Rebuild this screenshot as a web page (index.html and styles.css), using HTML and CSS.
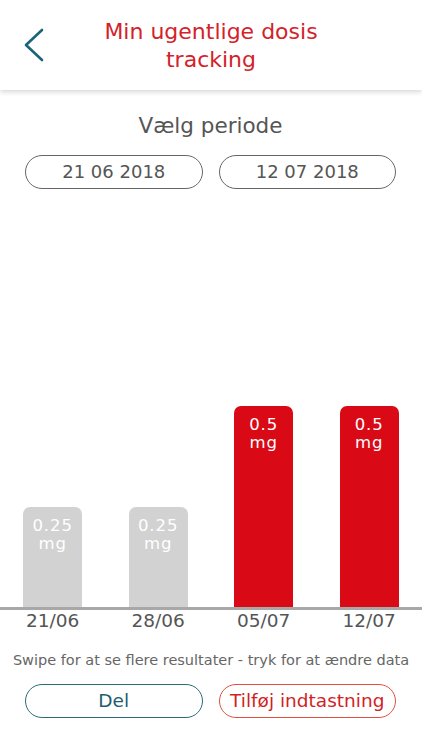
FILE: index.html
```html
<!DOCTYPE html>
<html lang="da">
<head>
<meta charset="utf-8" />
<title>Min ugentlige dosis tracking</title>
<link rel="stylesheet" href="styles.css">
</head>
<body>
<!--topbar-->
<div class="topbar">
  <a class="back" href="#">
    <svg width="20" height="34" viewBox="0 0 20 34"><polyline points="18,2 2,17 18,32" fill="none" stroke="#1b6478" stroke-width="2.6" stroke-linecap="round" stroke-linejoin="round"/></svg>
  </a>
  <h1 class="title">Min ugentlige dosis<br/>tracking</h1>
  <div></div>
</div>

<div class="period">
  <h2>Vælg periode</h2>
  <div class="dates">
    <div class="pill">21 06 2018</div>
    <div class="pill">12 07 2018</div>
  </div>
</div>

<!--chart-->
<div class="chart">
  <div class="col"><div class="bar bar_low" style="height:100px"><span>0.25</span><span>mg</span></div></div>
  <div class="col"><div class="bar bar_low" style="height:100px"><span>0.25</span><span>mg</span></div></div>
  <div class="col"><div class="bar bar_high" style="height:201px"><span>0.5</span><span>mg</span></div></div>
  <div class="col"><div class="bar bar_high" style="height:201px"><span>0.5</span><span>mg</span></div></div>
</div>
<div class="axis">
  <div>21/06</div>
  <div>28/06</div>
  <div>05/07</div>
  <div>12/07</div>
</div>

<p class="hint">Swipe for at se flere resultater - tryk for at ændre data</p>

<div class="actions">
  <a class="btn btn_share" href="#">Del</a>
  <a class="btn btn_add" href="#">Tilføj indtastning</a>
</div>
</body>
</html>
```

FILE: styles.css
```css
body, h1, h2, p, div {margin:0;padding:0}
body { background:#fff; font-family:"DejaVu Sans", Verdana, sans-serif; color:#555; width:422px; }
a { text-decoration:none }

.topbar { height:90px; display:grid; grid-template-columns:70px 1fr 70px; align-items:center; box-shadow:0 2px 5px rgba(0,0,0,.16); position:relative; z-index:2 }
.back { display:flex; padding-left:24px; }
.title { font-size:22px; line-height:28px; font-weight:normal; color:#d3222a; text-align:center; margin-top:2px }

.period { padding:0 26px 0 25px; }
.period h2 { font-size:21.5px; line-height:26px; font-weight:normal; text-align:center; margin-top:23px; color:#555 }
.dates { display:grid; grid-template-columns:1fr 1fr; gap:16px; margin-top:16px }
.pill { height:32px; line-height:32px; border:1px solid #666; border-radius:17px; text-align:center; font-size:18px; color:#555 }

.chart { height:418px; display:flex; align-items:flex-end; border-bottom:3px solid #a8a8a8 }
.col { flex:1; display:flex; justify-content:center }
.bar { width:59px; border-radius:7px 7px 0 0; display:flex; flex-direction:column; align-items:center; padding-top:10px; box-sizing:border-box; color:#fff; font-size:16.5px; line-height:17.5px; letter-spacing:1px }
.bar_low { background:#d2d2d2 }
.bar_high { background:#d90a16 }

.axis { display:flex; }
.axis div { flex:1; text-align:center; font-size:18.5px; line-height:22px; color:#555 }

.hint { text-align:center; font-size:14.5px; line-height:17px; color:#666; margin-top:20px }

.actions { display:grid; grid-template-columns:1fr 1fr; gap:16px; padding:0 26px 0 25px; margin-top:15px }
.btn { display:block; height:32px; line-height:32px; border-radius:17px; text-align:center; font-size:18.5px }
.btn_share { border:1px solid #2b6a7c; color:#1d5d70 }
.btn_add { border:1px solid #e0503f; color:#d21f26 }
```
